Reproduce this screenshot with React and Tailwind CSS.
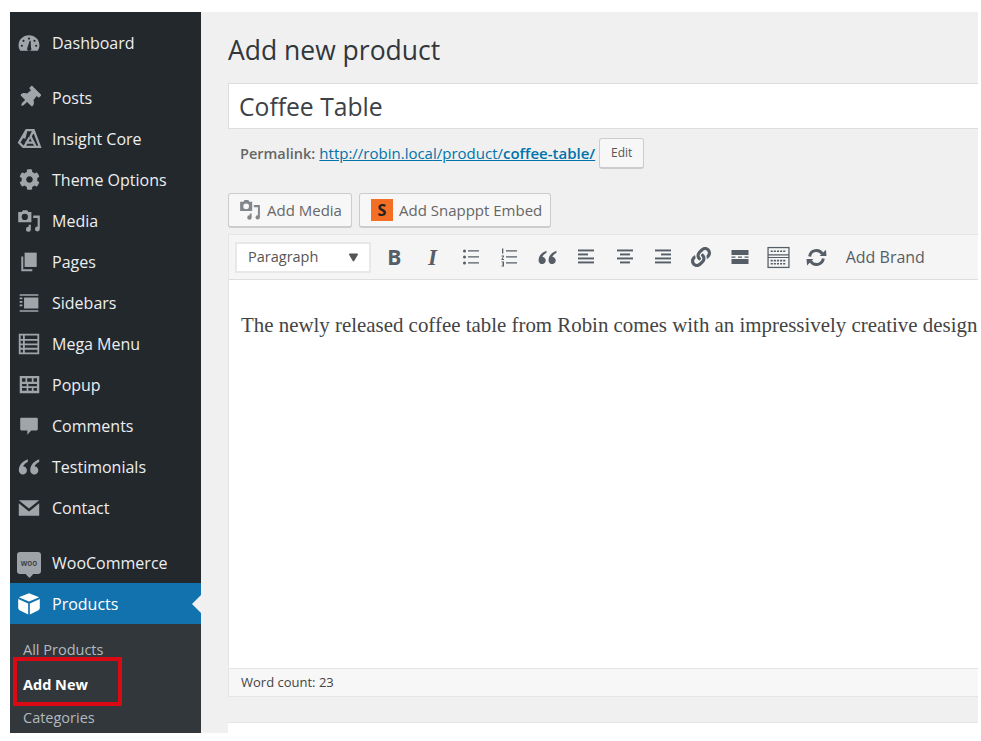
import { FaThumbtack, FaCog, FaLink, FaPlay } from 'react-icons/fa';

const g = 'currentColor';

function Svg({ children, className = 'w-[22px] h-[22px]' }) {
  return <svg viewBox="0 0 20 20" fill={g} className={className}>{children}</svg>;
}

function MediaIcon({ className }) {
  return (
    <Svg className={className}>
      <path fillRule="evenodd" d="M1 2.500h3l1-1.500h3.500l1 1.500H12V11H1V2.500zM6.500 4a2.600 2.600 0 100 5.200 2.600 2.600 0 000-5.200z" />
      <path d="M13.500 5.500H19v11.200a2 2 0 11-1.800-2V7.500h-3.700V5.500zM11.500 13.200v3.600a2 2 0 11-1.800-1.900v-1.700h1.800z" />
    </Svg>
  );
}

function QuoteIcon({ className }) {
  return (
    <Svg className={className}>
      <path d="M9 3.500C5 5 1.500 8 1.500 12.800a3.400 3.400 0 106.600-1.100 3.300 3.300 0 00-3-2.300C5.800 7.800 7.300 6.500 9 5.800zM18.500 3.500c-4 1.500-7.500 4.500-7.500 9.300a3.400 3.400 0 106.600-1.100 3.300 3.300 0 00-3-2.300c.7-1.600 2.200-2.900 3.900-3.600z" />
    </Svg>
  );
}

const dash = <Svg><path fillRule="evenodd" d="M10 3C4.500 3 .5 7 .5 12c0 2 .7 3.600 1.600 5h15.800c.9-1.400 1.600-3 1.600-5 0-5-4-9-9.500-9zM10 5a1 1 0 110 2 1 1 0 010-2zM5 7a1 1 0 110 2 1 1 0 010-2zm10 0a1 1 0 110 2 1 1 0 010-2zM3.500 11.500a1 1 0 110 2 1 1 0 010-2zm13 0a1 1 0 110 2 1 1 0 010-2zM11.500 8l.3 6a2 2 0 11-3.200 0l2-6h.9z" /></Svg>;
const insight = (
  <svg viewBox="0 0 24 24" fill="none" stroke={g} strokeWidth="2.200" className="w-[25px] h-[25px]">
    <path d="M2 16l7-12h7l6 16H6l-4-4zM9 4l-2 8M16 4l-3 6 5 10M7 20l5-9M8 16h9" />
  </svg>
);
const pages = <Svg><path d="M6 1.500h11v13H6z" /><path d="M3 5h1.800v11.500H13V18.500H3z" /></Svg>;
const sidebars = <Svg><path d="M5.500 5h13v10h-13zM1.500 5h2.500v1.600H1.500zM1.500 8.200h2.500v1.600H1.500zM1.500 11.400h2.500V13H1.500zM1.500 2h17v1.500h-17zM1.500 16.500h17V18h-17z" /></Svg>;
const mega = <Svg className="w-[24px] h-[24px]"><path fillRule="evenodd" d="M1.500 1.500h17v17h-17zM3 3v2.800h2V3zm3.500 0v2.800H17V3zM3 7.300v2.200h2V7.300zm3.500 0v2.200H17V7.300zM3 11v2.200h2V11zm3.500 0v2.200H17V11zM3 14.700V17h2v-2.300zm3.500 0V17H17v-2.300z" /></Svg>;
const popup = <Svg className="w-[23px] h-[23px]"><path fillRule="evenodd" d="M1.500 2.500h17v15h-17zM3.500 4.500v3h3v-3zm4.500 0v3h4v-3zm5.500 0v3h3v-3zM3.500 9.500v2h4v-2zm5.500 0v2h7.500v-2zM3.500 13v2.500h4V13zm5.500 0v2.500h3V13zm4.500 0v2.500h3V13z" /></Svg>;
const comment = <Svg><path d="M3 2.500h14a1 1 0 011 1v9.500a1 1 0 01-1 1h-5l-3.500 4v-4H3a1 1 0 01-1-1V3.500a1 1 0 011-1z" /></Svg>;
const mail = <Svg className="w-[24px] h-[24px]"><path d="M1.500 3.500h17L10 10.500zM1.500 6l8.500 7 8.500-7v10.500h-17z" /></Svg>;
const woo = (
  <span className="relative flex items-center justify-center w-[24px] h-[22px] rounded-[3px] bg-[#9ea3a8] text-[8px] leading-none text-[#32373c] font-semibold">
    woo
    <span className="absolute -bottom-[3px] left-[10px] w-[5px] h-[5px] rotate-45 bg-[#9ea3a8]" />
  </span>
);
const box = <Svg className="w-[24px] h-[24px]"><path d="M10 1l8.500 3.300L10 8 1.500 4.300zM1 5.800l8.300 3.700v9.300L2.500 15.500A2.500 2.500 0 011 13.300zM19 5.800l-8.300 3.700v9.300l6.800-3.300a2.500 2.500 0 001.500-2.200z" /></Svg>;

const menuTop = [
  ['Posts', <FaThumbtack className="w-[22px] h-[22px] rotate-45" />],
  ['Insight Core', insight],
  ['Theme Options', <FaCog className="w-[21px] h-[21px]" />],
  ['Media', <MediaIcon className="w-[24px] h-[24px]" />],
  ['Pages', pages],
  ['Sidebars', sidebars],
  ['Mega Menu', mega],
  ['Popup', popup],
  ['Comments', comment],
  ['Testimonials', <QuoteIcon className="w-[24px] h-[24px]" />],
  ['Contact', mail],
];

function MenuRow({ label, icon }) {
  return (
    <div className="flex items-center h-[41px] text-[#eceef0]">
      <span className="flex items-center justify-center w-[42px] pr-[4px] text-[#a0a5aa]">{icon}</span>
      <span className="text-[16px] leading-none">{label}</span>
    </div>
  );
}

function AlignIcon({ rows }) {
  return (
    <svg viewBox="0 0 20 20" fill={g} className="w-[20px] h-[20px]">
      {rows.map(([x, y, w]) => <rect key={y} x={x} y={y} width={w} height="1.900" />)}
    </svg>
  );
}

const tools = [
  <span className="text-[21px] font-bold leading-none">B</span>,
  <span className="text-[23px] font-bold italic leading-none font-['Liberation_Serif',serif]">I</span>,
  <svg viewBox="0 0 20 20" fill={g} className="w-[20px] h-[20px]"><circle cx="3.500" cy="4" r="1.500" /><circle cx="3.500" cy="10" r="1.500" /><circle cx="3.500" cy="16" r="1.500" /><path d="M7 3.300h11v1.300H7zM7 9.300h11v1.300H7zM7 15.300h11v1.300H7z" /></svg>,
  <svg viewBox="0 0 20 20" fill={g} className="w-[20px] h-[20px]"><path d="M3 1.500h1.300v5H3zM2.500 8.500h2.500v1L3.500 12H5v1H2.500v-1L4 9.500H2.500zM2.500 14.500H5v5H2.500v-1H4v-1H3v-1h1v-1H2.500z" /><path d="M7 3.300h11v1.300H7zM7 9.300h11v1.300H7zM7 15.300h11v1.300H7z" /></svg>,
  <QuoteIcon className="w-[21px] h-[21px]" />,
  <AlignIcon rows={[[2, 2.500, 16], [2, 6.500, 10], [2, 10.500, 16], [2, 14.500, 16]]} />,
  <AlignIcon rows={[[2, 2.500, 16], [5, 6.500, 10], [2, 10.500, 16], [5, 14.500, 10]]} />,
  <AlignIcon rows={[[2, 2.500, 16], [8, 6.500, 10], [2, 10.500, 16], [2, 14.500, 16]]} />,
  <FaLink className="w-[20px] h-[20px]" />,
  <svg viewBox="0 0 20 20" fill={g} className="w-[20px] h-[20px]"><path d="M1.500 3h17v5h-17zM1.500 12h17v5h-17zM1.500 9.400h4v1.300h-4zM8 9.400h4v1.300H8zM14.500 9.400h4v1.300h-4z" /></svg>,
  <svg viewBox="0 0 22 22" className="w-[23px] h-[23px]" fill="none" stroke={g}><rect x="1" y="1.500" width="20" height="19" strokeWidth="1.200" /><path d="M1 11h20M1 8.500h20" strokeWidth="1" /><path d="M3.500 5h15M3.500 14h15M3.500 17h15" strokeWidth="1.600" strokeDasharray="2 1" /></svg>,
  <svg viewBox="0 0 20 20" fill="none" stroke={g} strokeWidth="2.800" className="w-[21px] h-[21px]"><path d="M3.500 9a6.500 6.500 0 0112-2.500M16.500 11a6.500 6.500 0 01-12 2.500" /><path d="M13 8.500h6.500l-.5-6zM7 11.500H.5l.5 6z" fill={g} stroke="none" /></svg>,
];

export default function App() {
  return (
    <div className="pt-[12px] pl-[10px] h-screen bg-white font-['Open_Sans',sans-serif]">
      <div className="relative flex w-[968px] h-[721px] overflow-hidden bg-[#f0f0f0]">
        <aside className="w-[191px] shrink-0 bg-[#23282d] pt-[10px]">
          <MenuRow label="Dashboard" icon={dash} />
          <div className="mt-[14px]">
            {menuTop.map(([label, icon]) => <MenuRow key={label} label={label} icon={icon} />)}
          </div>
          <div className="mt-[14px]">
            <MenuRow label="WooCommerce" icon={woo} />
          </div>
          <div className="relative flex items-center h-[41px] bg-[#1272ad] text-white">
            <span className="flex items-center justify-center w-[42px] pr-[4px]">{box}</span>
            <span className="text-[16px] leading-none">Products</span>
            <span className="absolute right-0 top-[12px] w-0 h-0 border-y-[9px] border-y-transparent border-r-[9px] border-r-[#f0f0f0]" />
          </div>
          <div className="h-[200px] bg-[#32373c] pt-[9px] pl-[13px] text-[14.500px] text-[#b4b9be]">
            <div className="h-[34px] flex items-center">All Products</div>
            <div className="h-[34px] flex items-center pt-[1px] font-bold text-white">Add New</div>
            <div className="h-[34px] flex items-center">Categories</div>
          </div>
        </aside>

        <main className="flex-1 min-w-0 pl-[27px] text-[#444]">
          <h1 className="h-[71px] pt-[18px] text-[26.500px] leading-[40px] text-[#32373c]">Add new product</h1>

          <div className="flex items-center h-[46px] pl-[10px] pt-[2px] bg-white border border-[#ddd] border-r-0 text-[24.700px] text-[#3c4146]">Coffee Table</div>

          <div className="flex items-center h-[31px] mt-[9px] pl-[12px] text-[15px]">
            <b className="text-[#666] font-semibold text-[14.500px]">Permalink:</b>
            <a className="ml-[4px] text-[#0073aa] underline">http://robin.local/product/<b className="font-semibold">coffee-table/</b></a>
            <span className="flex items-center justify-center ml-[4px] w-[45px] h-[31px] rounded-[3px] border border-[#ccc] bg-[#f7f7f7] border-b-2 text-[12px] text-[#555]">Edit</span>
          </div>

          <div className="flex gap-[7px] mt-[24px]">
            <span className="flex items-center h-[35px] w-[124px] pl-[10px] rounded-[3px] border border-[#ccc] border-b-2 bg-[#f7f7f7] text-[15px] text-[#666]">
              <MediaIcon className="w-[22px] h-[22px] text-[#82878c] mr-[6px]" />Add Media
            </span>
            <span className="flex items-center h-[35px] w-[192px] pl-[11px] rounded-[3px] border border-[#ccc] border-b-2 bg-[#f7f7f7] text-[15px] text-[#666]">
              <span className="flex items-center justify-center w-[22px] h-[22px] mr-[6px] bg-[#f26f25] text-[16px] font-bold text-[#222]">S</span>Add Snapppt Embed
            </span>
          </div>

          <div className="mt-[6px] border border-[#e5e5e5] border-r-0 bg-white">
            <div className="flex items-center h-[45px] pl-[6px] bg-[#f5f5f5] border-b border-[#ddd] text-[#555d66]">
              <span className="flex items-center justify-between w-[136px] h-[31px] px-[11px] bg-white border-2 border-[#e8e8e8] text-[14.500px] text-[#555]">
                Paragraph
                <FaPlay className="w-[9px] h-[9px] rotate-90 text-[#555]" />
              </span>
              <div className="flex ml-[4px]">
                {tools.map((tool, i) => (
                  <span key={i} className="flex items-center justify-center w-[38.400px] h-[30px]">{tool}</span>
                ))}
              </div>
              <span className="ml-[10px] text-[16px] whitespace-nowrap text-[#555d66]">Add Brand</span>
            </div>
            <div className="h-[388px] overflow-hidden pl-[12px] pt-[30px] whitespace-nowrap font-['Liberation_Serif',serif] text-[20.900px] leading-[30px] text-[#444]">
              The newly released coffee table from Robin comes with an impressively creative design
            </div>
            <div className="flex items-center h-[28px] pl-[12px] pt-[1px] bg-[#f7f7f7] border-t border-[#e5e5e5] text-[13px] text-[#444]">Word count: 23</div>
          </div>

          <div className="h-[60px] mt-[25px] bg-white border-t border-[#e5e5e5]" />
        </main>

        <div className="absolute left-[3px] top-[645px] w-[109px] h-[49px] border-[4px] border-[#d90a14]" />
      </div>
    </div>
  );
}
